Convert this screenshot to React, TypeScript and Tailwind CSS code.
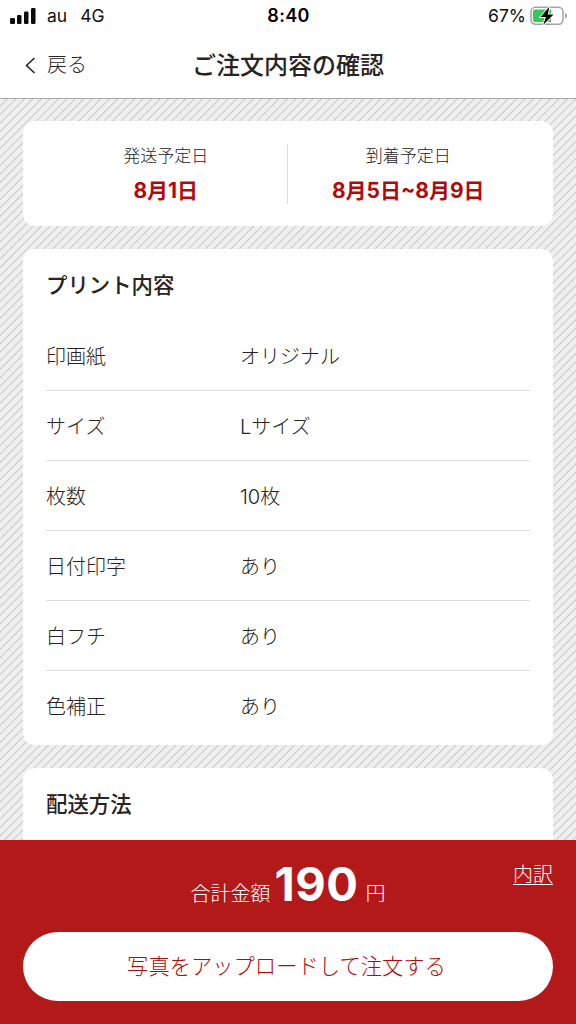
const rows = [
  ["印画紙", "オリジナル"],
  ["サイズ", "Lサイズ"],
  ["枚数", "10枚"],
  ["日付印字", "あり"],
  ["白フチ", "あり"],
  ["色補正", "あり"],
];

function StatusBar() {
  return (
    <div className="flex h-8 items-center justify-between pr-[9px] pl-[10px] text-[17.5px] leading-none text-[#111]">
      <div className="flex w-[180px] items-center">
        <svg width="26" height="16" viewBox="0 0 26 16" fill="#0b0b0b">
          <rect x="0" y="10" width="5" height="6" rx="1.2" />
          <rect x="7" y="7" width="4.5" height="9" rx="1.2" />
          <rect x="14" y="3.5" width="4.5" height="12.5" rx="1.2" />
          <rect x="21" y="0" width="4.5" height="16" rx="1.2" />
        </svg>
        <span className="ml-[11px]">au</span>
        <span className="ml-[13px]">4G</span>
      </div>
      <div className="text-[18px] font-semibold tracking-[0.3px] text-black">8:40</div>
      <div className="flex w-[180px] items-center justify-end">
        <span>67%</span>
        <svg className="ml-[4px]" width="37" height="20" viewBox="0 0 37 20">
          <rect x="1" y="1.2" width="32" height="17" rx="4.5" fill="#fff" stroke="#a3a3a3" strokeWidth="1.5" />
          <path d="M5 3.5h16v12.500H5a2 2 0 0 1-2-2v-8.500a2 2 0 0 1 2-2z" fill="#34c759" />
          <path d="M35 7v5.500c1.400-.5 2-1.500 2-2.700S36.400 7.500 35 7z" fill="#a3a3a3" />
          <path d="M19.300.8 10.500 11h5.400l-2.600 7.800L23.500 8.400h-5.600z" fill="#000" stroke="#fff" strokeWidth="1.800" paintOrder="stroke" />
        </svg>
      </div>
    </div>
  );
}

function Schedule({ label, date }: { label: string; date: string }) {
  return (
    <div className="flex flex-1 flex-col items-center">
      <div className="text-[17px] leading-[24px] font-light">{label}</div>
      <div className="mt-[10px] text-[21px] leading-[26px] font-bold text-[#b00a0a]">{date}</div>
    </div>
  );
}

export default function App() {
  return (
    <div
      lang="ja"
      className="flex h-[1024px] w-[576px] flex-col overflow-hidden bg-white font-['Inter','Noto_Sans_CJK_JP',sans-serif] text-[#2a2323]"
    >
      <header className="h-[99px] shrink-0 border-b border-[#aaa] bg-white">
        <StatusBar />
        <div className="grid h-[66px] grid-cols-[1fr_auto_1fr] items-center pr-[25px] pl-[25px]">
          <button className="flex items-center text-[20px] font-light">
            <svg width="11" height="17" viewBox="0 0 11 17" fill="none" stroke="#2a2323" strokeWidth="1.600">
              <path d="M9.500 1 1.500 8.500l8 7.500" />
            </svg>
            <span className="ml-[11px]">戻る</span>
          </button>
          <h1 className="pt-px text-[24px] font-medium">ご注文内容の確認</h1>
          <span />
        </div>
      </header>

      <main className="flex min-h-0 flex-1 flex-col gap-[23px] overflow-hidden bg-[#efefef] bg-[repeating-linear-gradient(135deg,#efefef_0px,#efefef_4.300px,#cbcbcb_4.900px,#cbcbcb_5.400px,#efefef_6px)] px-[23px] pt-[22px]">
        <section className="flex h-[105px] shrink-0 items-center rounded-[12px] bg-white pr-[24px] pl-[22px]">
          <Schedule label="発送予定日" date="8月1日" />
          <div className="h-[60px] w-px bg-[#ddd]" />
          <Schedule label="到着予定日" date="8月5日~8月9日" />
        </section>

        <section className="h-[496px] shrink-0 rounded-[12px] bg-white px-[23px]">
          <h2 className="h-[72px] pt-[20px] text-[21.400px] leading-[32px] font-medium">プリント内容</h2>
          <dl>
            {rows.map(([label, value], i) => (
              <div
                key={label}
                className={`flex h-[70px] items-center border-b pt-[3px] text-[20px] font-light ${i < rows.length - 1 ? "border-[#dedede]" : "border-transparent"}`}
              >
                <dt className="w-[194px]">{label}</dt>
                <dd>{value}</dd>
              </div>
            ))}
          </dl>
        </section>

        <section className="h-[200px] shrink-0 rounded-[12px] bg-white px-[23px] pt-[20px]">
          <h2 className="text-[21.400px] leading-[32px] font-medium">配送方法</h2>
        </section>
      </main>

      <footer className="h-[184px] shrink-0 bg-[#b31919] px-[23px] text-white">
        <div className="grid h-[92px] grid-cols-[1fr_auto_1fr] items-start text-[20px] font-light">
          <span />
          <div className="flex items-baseline pt-[15px] leading-[58px]">
            <span>合計金額</span>
            <span className="ml-[4px] text-[47px] font-bold tracking-[0.5px]">190</span>
            <span className="ml-[7px]">円</span>
          </div>
          <a className="justify-self-end pt-[20px] leading-[30px] underline decoration-1 underline-offset-[2px]">内訳</a>
        </div>
        <button className="flex h-[69px] w-full items-center justify-center rounded-full bg-white pr-[3px] text-[21.300px] font-light text-[#b00a0a]">
          写真をアップロードして注文する
        </button>
      </footer>
    </div>
  );
}
